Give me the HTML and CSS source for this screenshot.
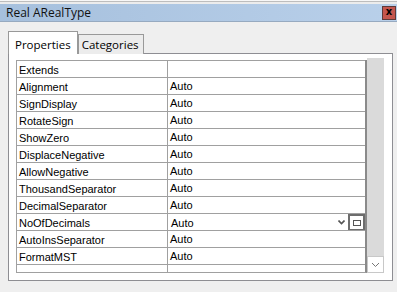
FILE: index.html
```html
<!DOCTYPE html>
<html lang="en">
  <head>
    <meta charset="UTF-8" />
    <title>Real ARealType</title>
    <link rel="stylesheet" href="styles.css">
  </head>
  <body>
    <div class="window">
      <div class="topline"></div>
      <div class="titlebar">
        <span class="title">Real ARealType</span>
        <span class="close">x</span>
      </div>

      <div class="content">
        <div class="tabs">
          <div class="tab active">Properties</div>
          <div class="tab">Categories</div>
        </div>

        <div class="panel">
          <div class="gridwrap">
            <div class="grid">
              <div class="row"><div class="name">Extends</div><div class="value"></div></div>
              <div class="row"><div class="name">Alignment</div><div class="value">Auto</div></div>
              <div class="row"><div class="name">SignDisplay</div><div class="value">Auto</div></div>
              <div class="row"><div class="name">RotateSign</div><div class="value">Auto</div></div>
              <div class="row"><div class="name">ShowZero</div><div class="value">Auto</div></div>
              <div class="row"><div class="name">DisplaceNegative</div><div class="value">Auto</div></div>
              <div class="row"><div class="name">AllowNegative</div><div class="value">Auto</div></div>
              <div class="row"><div class="name">ThousandSeparator</div><div class="value">Auto</div></div>
              <div class="row"><div class="name">DecimalSeparator</div><div class="value">Auto</div></div>
              <div class="row editing">
                <div class="name">NoOfDecimals</div>
                <div class="value">
                  <span class="edit">Auto</span>
                  <svg class="chev" width="7" height="5" viewBox="0 0 7 5">
                    <path d="M0.5 0.5 L3.5 3.5 L6.5 0.5" fill="none" stroke="#555" stroke-width="1.6"/>
                  </svg>
                  <span class="dots"><span class="sq"></span></span>
                </div>
              </div>
              <div class="row"><div class="name">AutoInsSeparator</div><div class="value">Auto</div></div>
              <div class="row"><div class="name">FormatMST</div><div class="value">Auto</div></div>
              <div class="row last"><div class="name"></div><div class="value"></div></div>
            </div>
            <div class="scrollbar">
              <div class="track"></div>
              <div class="arrow">
                <svg width="9" height="6" viewBox="0 0 9 6">
                  <path d="M1 1 L4.5 4.5 L8 1" fill="none" stroke="#777" stroke-width="1"/>
                </svg>
              </div>
            </div>
          </div>
        </div>
      </div>
    </div>
  </body>
</html>
```

FILE: styles.css
```css
body {
  margin: 0;
  background: #efefef;
  font-family: "Liberation Sans", Arial, sans-serif;
}
.window {
  width: 397px;
  height: 292px;
  background: #efefef;
}
.topline {
  height: 4px;
  background: linear-gradient(#f7f7f7 0, #f7f7f7 1px, #bdbdbd 1px, #bdbdbd 2px, #ececec 2px);
}
.titlebar {
  height: 17px;
  display: flex;
  align-items: center;
  justify-content: space-between;
  background: linear-gradient(to right, #a6c0dd, #b9d0ea);
  border-bottom: 1px solid #97aac0;
  padding-left: 6px;
}
.title {
  font-family: "Open Sans", sans-serif;
  font-size: 12px;
  color: #111;
}
.close {
  width: 12px;
  height: 12px;
  margin-right: 1px;
  background: #c4564e;
  border: 1px solid #5e3a3a;
  font-family: "DejaVu Sans", sans-serif;
  font-weight: bold;
  font-size: 10px;
  line-height: 10px;
  text-align: center;
  color: #000;
}
.content {
  padding: 10px 4px 10px 8px;
}
.tabs {
  display: flex;
  align-items: flex-end;
  height: 22px;
  position: relative;
  z-index: 1;
  margin-bottom: -1px;
}
.tab {
  font-family: "Open Sans", sans-serif;
  font-size: 11.5px;
  color: #000;
  border: 1px solid #999;
  border-bottom: none;
  height: 19px;
  line-height: 19px;
  padding: 0 4px 0 3px;
  background: #ececec;
}
.tab.active {
  height: 22px;
  line-height: 25px;
  padding: 0 6px;
  background: #fff;
}
.panel {
  height: 228px;
  background: #fff;
  border: 1px solid #8e8e93;
  padding: 6px 8px 0 7px;
  box-sizing: border-box;
  width: 385px;
}
.gridwrap {
  display: flex;
  height: 213px;
}
.grid {
  width: 351px;
  border: 1px solid #a0a0a0;
  border-right: 2px solid #8a8a8a;
  border-top: none;
  box-sizing: border-box;
  height: 213px;
  overflow: hidden;
  font-size: 11px;
  color: #000;
}
.row {
  display: flex;
  height: 17px;
  border-top: 1px solid #a0a0a0;
  box-sizing: border-box;
  overflow: hidden;
}
.name {
  width: 148px;
  padding-left: 2px;
  line-height: 18px;
  border-right: 1px solid #a0a0a0;
}
.value {
  flex: 1;
  padding-left: 2px;
  line-height: 18px;
  display: flex;
  align-items: center;
}
.row.editing .value {
  padding-left: 3px;
}
.edit {
  flex: 1;
  line-height: 18px;
  padding-top: 1px;
}
.chev {
  margin-right: 3px;
}
.dots {
  width: 13px;
  height: 13px;
  border: 2px solid #6d6d6d;
  display: flex;
  align-items: center;
  justify-content: center;
  background: #fff;
  margin-top: 1px;
}
.sq {
  width: 6px;
  height: 4px;
  border: 1px solid #555;
}
.scrollbar {
  width: 17px;
  display: flex;
  flex-direction: column;
  margin-top: -2px;
}
.track {
  flex: 1;
  background: #dadada;
}
.arrow {
  height: 15px;
  border: 1px solid #c8c8c8;
  background: #fff;
  display: flex;
  align-items: center;
  justify-content: center;
}
```
